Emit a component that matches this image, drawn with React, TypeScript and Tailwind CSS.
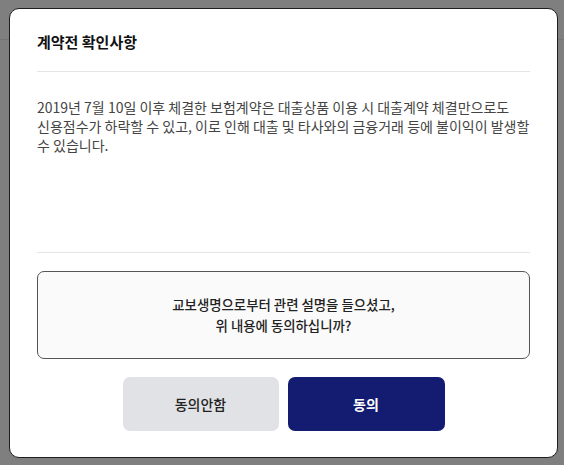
export default function App() {
  return (
    <div
      className="relative h-[465px] w-[564px] overflow-hidden bg-white"
      style={{ fontFamily: '"Noto Sans CJK KR", "Noto Sans", sans-serif' }}
    >
      {/* page behind the dialog */}
      <div className="h-[40px] border-b border-[#e8e8e8]" />

      {/* dim layer */}
      <div className="absolute inset-0 bg-black/50" />

      <div className="absolute left-[9px] top-[8px] flex h-[450px] w-[549px] flex-col rounded-[10px] border border-[#1e1e1e] bg-white px-[27px]">
        <div className="flex h-[63px] items-center border-b border-[#e5e5e5]">
          <h2 className="pt-[4px] text-[15px] font-bold text-[#111]">계약전 확인사항</h2>
        </div>

        <div className="h-[181px] border-b border-[#e5e5e5] pt-[26px]">
          <p className="break-keep text-[14px] leading-[19px] text-[#444]">
            2019년 7월 10일 이후 체결한 보험계약은 대출상품 이용 시 대출계약 체결만으로도 신용점수가 하락할 수 있고, 이로 인해 대출 및 타사와의 금융거래 등에 불이익이 발생할 수 있습니다.
          </p>
        </div>

        <div className="mt-[18px] flex h-[88px] flex-col items-center justify-center rounded-[7px] border border-[#555] bg-[#fafafa] text-center text-[13.4px] font-medium leading-[21px] text-[#222]">
          <p>교보생명으로부터 관련 설명을 들으셨고,</p>
          <p>위 내용에 동의하십니까?</p>
        </div>

        <div className="mt-[18px] flex justify-center gap-[9px]">
          <button
            type="button"
            className="h-[54px] w-[156px] rounded-[7px] bg-[#e1e2e6] text-[14px] font-medium text-[#222]"
          >
            동의안함
          </button>
          <button
            type="button"
            className="h-[54px] w-[157px] rounded-[7px] bg-[#141c72] text-[14px] font-bold text-white"
          >
            동의
          </button>
        </div>
      </div>
    </div>
  )
}
